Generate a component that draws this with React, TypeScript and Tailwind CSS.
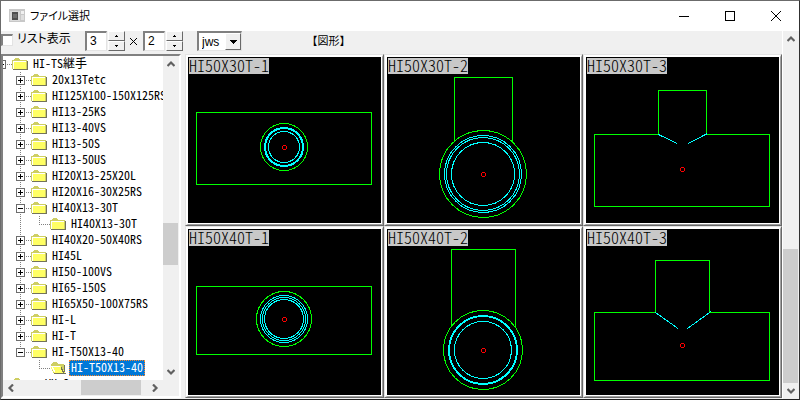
import React from "react";

type TreeRow = {
  label: string;
  level: number;
  mark?: "plus" | "minus";
  open?: boolean;
  selected?: boolean;
  trunk?: boolean;
  cut?: boolean;
};

const rows: TreeRow[] = [
  { label: "HI-TS継手", level: 0, mark: "minus" },
  { label: "20x13Tetc", level: 1, mark: "plus" },
  { label: "HI125X100-150X125RS", level: 1, mark: "plus" },
  { label: "HI13-25KS", level: 1, mark: "plus" },
  { label: "HI13-40VS", level: 1, mark: "plus" },
  { label: "HI13-50S", level: 1, mark: "plus" },
  { label: "HI13-50US", level: 1, mark: "plus" },
  { label: "HI20X13-25X20L", level: 1, mark: "plus" },
  { label: "HI20X16-30X25RS", level: 1, mark: "plus" },
  { label: "HI40X13-30T", level: 1, mark: "minus" },
  { label: "HI40X13-30T", level: 2, trunk: true },
  { label: "HI40X20-50X40RS", level: 1, mark: "plus" },
  { label: "HI45L", level: 1, mark: "plus" },
  { label: "HI50-100VS", level: 1, mark: "plus" },
  { label: "HI65-150S", level: 1, mark: "plus" },
  { label: "HI65X50-100X75RS", level: 1, mark: "plus" },
  { label: "HI-L", level: 1, mark: "plus" },
  { label: "HI-T", level: 1, mark: "plus" },
  { label: "HI-T50X13-40", level: 1, mark: "minus", cut: true },
  { label: "HI-T50X13-40", level: 2, open: true, selected: true },
  { label: "　 VU-S", level: 0 },
];

const GREEN = "#00ff00";
const CYAN = "#00ffff";

function Rings({ cx, cy, green, cyan }: { cx: number; cy: number; green: number; cyan: number[] }) {
  return (
    <g>
      <circle cx={cx} cy={cy} r={green} stroke={GREEN} />
      {cyan.map((r) => (
        <circle key={r} cx={cx} cy={cy} r={r} stroke={CYAN} />
      ))}
    </g>
  );
}

const figures: { name: string; dot: [number, number]; art: React.ReactNode }[] = [
  {
    name: "HI50X30T-1",
    dot: [96.5, 90.5],
    art: (
      <>
        <rect x="8.5" y="55.5" width="175" height="72" stroke={GREEN} />
        <Rings cx={96} cy={90} green={23.5} cyan={[19.5, 18.5, 15.5]} />
      </>
    ),
  },
  {
    name: "HI50X30T-2",
    dot: [96.5, 117.5],
    art: (
      <>
        <path d="M67.5 85V20.5H125.5V85" stroke={GREEN} />
        <Rings cx={96} cy={117} green={43.5} cyan={[38.5, 36.5, 31.5]} />
      </>
    ),
  },
  {
    name: "HI50X30T-3",
    dot: [96.5, 112.5],
    art: (
      <>
        <path d="M72.5 77.5V33.5H120.5V77.5H183.5V149.5H8.5V77.5Z" stroke={GREEN} />
        <path d="M72.5 77.5L91 86.5M121.5 76.5L102 86.5" stroke={CYAN} />
      </>
    ),
  },
  {
    name: "HI50X40T-1",
    dot: [96.5, 90.5],
    art: (
      <>
        <rect x="8.5" y="57.5" width="175" height="68" stroke={GREEN} />
        <Rings cx={96} cy={90} green={27.5} cyan={[23.5, 21.5, 19.5]} />
      </>
    ),
  },
  {
    name: "HI50X40T-2",
    dot: [96.5, 121.5],
    art: (
      <>
        <path d="M64.5 98V20.5H128.5V98" stroke={GREEN} />
        <Rings cx={96} cy={121} green={39.5} cyan={[34.5, 33.5, 28.5]} />
      </>
    ),
  },
  {
    name: "HI50X40T-3",
    dot: [96.5, 116.5],
    art: (
      <>
        <path d="M69.5 83.5V31.5H123.5V83.5H183.5V151.5H8.5V83.5Z" stroke={GREEN} />
        <path d="M69.5 83.5L92 99.5M125 82.5L101.5 99.5" stroke={CYAN} />
      </>
    ),
  },
];

function Folder({ open }: { open?: boolean }) {
  return (
    <svg width="16" height="14" viewBox="0 0 16 14" shapeRendering="crispEdges" className="shrink-0">
      {open ? (
        <>
          <path d="M1 3h1V2h1V1h4v1h1v1h6v9H3z" fill="#cece63" />
          <path d="M0 5h11l4 7H4z" fill="#ffff63" />
          <path d="M0 5.5h10M2 6v1h1v2h1v2" fill="none" stroke="#fff" />
          <path d="M4 12h12v1H4zM14 4h1v7h-1zM11 6h1v2h1v2h1v2h-1v-1h-1V9h-1z" fill="#73735a" />
        </>
      ) : (
        <>
          <path d="M0 3h2V2h1V1h4v1h1v1h7v9H0z" fill="#cece63" />
          <path d="M1 4h13v8H1z" fill="#fff" />
          <path d="M2 5h12v7H2z" fill="#ffff63" />
          <path d="M15 4h1v9H1v-1h14z" fill="#73735a" />
        </>
      )}
    </svg>
  );
}

function Gutter({ row }: { row: TreeRow }) {
  const width = 9 + 19 * row.level;
  const cx = 19 * row.level - 2;
  const nested = row.level === 2;
  return (
    <svg width={width} height="16" viewBox={`0 0 ${width} 16`} fill="none" shapeRendering="crispEdges" className="shrink-0">
      <g stroke="#808080" strokeDasharray="1 1">
        <path d={`M${cx} 8.5H${width}`} />
        {row.level > 0 && <path d={`M${cx + 0.5} 0V${nested || row.cut ? 8 : 16}`} />}
        {row.trunk && <path d="M17.5 0V16" />}
      </g>
      {row.mark && (
        <>
          <rect x={cx - 3.5} y="4.5" width="8" height="8" fill="#fff" stroke="#6d6d6d" />
          <path d={`M${cx - 2} 8.5h5${row.mark === "plus" ? `M${cx + 0.5} 6v5` : ""}`} stroke="#000" />
        </>
      )}
    </svg>
  );
}

const turns = { up: "", down: "rotate-180", left: "-rotate-90", right: "rotate-90" };

function ScrollArrow({ dir, label }: { dir: keyof typeof turns; label: string }) {
  return (
    <button type="button" aria-label={label} className="flex size-4 shrink-0 items-center justify-center">
      <svg width="8" height="8" viewBox="0 0 8 8" className={turns[dir]}>
        <path d="M0.5 6L4 2.5L7.5 6" fill="none" stroke="#606060" strokeWidth="2.2" />
      </svg>
    </button>
  );
}

function Spin({ id, label, value }: { id: string; label: string; value: string }) {
  const key =
    "flex h-[10px] w-[17px] items-center justify-center border border-t-white border-l-white border-r-[#696969] border-b-[#696969] bg-[#f0f0f0]";
  return (
    <div className="flex items-center gap-px">
      <input
        id={id}
        aria-label={label}
        defaultValue={value}
        className="h-5 w-[22px] border-t-2 border-l-2 border-r border-b border-t-[#808080] border-l-[#808080] border-r-[#e3e3e3] border-b-[#e3e3e3] bg-white pb-[2px] pl-[3px] text-xs outline-none"
      />
      <div className="flex flex-col">
        <button type="button" aria-label={`${label} +`} className={key}>
          <svg width="5" height="3" viewBox="0 0 5 3" shapeRendering="crispEdges">
            <path d="M2 0h1v1h1v1H1V1h1z" />
          </svg>
        </button>
        <button type="button" aria-label={`${label} -`} className={key}>
          <svg width="5" height="3" viewBox="0 0 5 3" shapeRendering="crispEdges">
            <path d="M1 0h3v1H3v1H2V1H1z" />
          </svg>
        </button>
      </div>
    </div>
  );
}

function TitleBar() {
  const key = "flex h-full w-[46px] items-center justify-center";
  return (
    <header className="flex h-[30px] shrink-0 items-center bg-white pl-2">
      <svg width="16" height="14" viewBox="0 0 16 14" shapeRendering="crispEdges">
        <path d="M0 0h16v13H0z" fill="#c8c8c8" />
        <path d="M1 2h10v10H1z" fill="#dcdcdc" />
        <path d="M3 3h6v8H3z" fill="#505050" />
        <path d="M4 5h4v4H4z" fill="#6e6e6e" />
        <path d="M12 2h3v3h-3z" fill="#f0f0f0" />
        <path d="M12 6h3v5h-3z" fill="#dedede" />
      </svg>
      <h1 className="ml-[5px] flex-1 text-[11px] [font-feature-settings:'palt']">ファイル選択</h1>
      <button type="button" aria-label="最小化" className={key}>
        <svg width="10" height="10" viewBox="0 0 10 10" shapeRendering="crispEdges">
          <path d="M0 5.5h10" stroke="#000" />
        </svg>
      </button>
      <button type="button" aria-label="最大化" className={key}>
        <svg width="10" height="10" viewBox="0 0 10 10" fill="none" shapeRendering="crispEdges">
          <rect x="0.5" y="0.5" width="9" height="9" stroke="#000" />
        </svg>
      </button>
      <button type="button" aria-label="閉じる" className={key}>
        <svg width="10" height="10" viewBox="0 0 10 10">
          <path d="M0 0l10 10M10 0L0 10" stroke="#000" />
        </svg>
      </button>
    </header>
  );
}

function Toolbar() {
  return (
    <div className="flex h-[23px] shrink-0 items-start text-xs">
      <label className="flex h-4 w-[84px] items-center gap-1 [font-feature-settings:'palt']">
        <input
          type="checkbox"
          className="mt-[2px] size-3 appearance-none border-t-2 border-l-2 border-r border-b border-t-[#808080] border-l-[#808080] border-r-[#e3e3e3] border-b-[#e3e3e3] bg-white"
        />
        リスト表示
      </label>
      <Spin id="cols" label="横" value="3" />
      <svg width="18" height="20" viewBox="0 0 18 20" className="shrink-0">
        <path d="M5 7l7 7M12 7l-7 7" stroke="#000" />
      </svg>
      <Spin id="rows" label="縦" value="2" />
      <div className="relative ml-[14px] h-5 w-[45px]">
        <select
          aria-label="拡張子"
          className="h-5 w-full appearance-none border-t-2 border-l-2 border-r border-b border-t-[#808080] border-l-[#808080] border-r-[#e3e3e3] border-b-[#e3e3e3] bg-white pl-[3px] text-xs outline-none"
        >
          <option>jws</option>
        </select>
        <span className="pointer-events-none absolute top-[2px] right-px flex h-[17px] w-4 items-center justify-center border border-t-white border-l-white border-r-[#696969] border-b-[#696969] bg-[#f0f0f0]">
          <svg width="7" height="4" viewBox="0 0 7 4" shapeRendering="crispEdges">
            <path d="M0 0h7v1H6v1H5v1H4v1H3V3H2V2H1V1H0z" />
          </svg>
        </span>
      </div>
      <span className="ml-[70px] text-[11px] leading-5 [font-feature-settings:'halt']">【図形】</span>
    </div>
  );
}

function Tree() {
  return (
    <nav className="mr-1 flex w-[180px] shrink-0 flex-col border-2 border-t-[#808080] border-l-[#808080] border-r-white border-b-white">
      <div className="flex min-h-0 flex-1">
        <ul className="min-w-0 flex-1 overflow-hidden bg-white font-['Noto_Sans_CJK_JP',sans-serif] [font-feature-settings:'hwid']">
          {rows.map((row, i) => (
            <li key={i} className="flex h-4 items-center text-xs leading-4 whitespace-nowrap">
              <Gutter row={row} />
              <button type="button" className="flex items-center gap-[3px]">
                <Folder open={row.open} />
                <span
                  className={
                    row.selected
                      ? "h-4 bg-[#0078d7] px-[2px] leading-[14px] text-white outline-1 -outline-offset-1 outline-dotted outline-[#ff8728]"
                      : "h-4 px-[2px] leading-[14px]"
                  }
                >
                  {row.label}
                </span>
              </button>
            </li>
          ))}
        </ul>
        <div className="flex w-4 flex-col bg-[#f0f0f0]">
          <ScrollArrow dir="up" label="上へ" />
          <div className="grow-[151]" />
          <div className="mr-px grow-[42] bg-[#cdcdcd]" />
          <div className="grow-[99]" />
          <ScrollArrow dir="down" label="下へ" />
        </div>
      </div>
      <div className="flex h-4 shrink-0 bg-[#f0f0f0] pr-4">
        <ScrollArrow dir="left" label="左へ" />
        <div className="grow-[62]" />
        <div className="mb-px grow-[60] bg-[#cdcdcd]" />
        <div className="grow-[6]" />
        <ScrollArrow dir="right" label="右へ" />
      </div>
    </nav>
  );
}

function FigureGrid() {
  return (
    <main className="grid min-w-0 flex-1 grid-cols-3 grid-rows-2">
      {figures.map((f) => (
        <button
          key={f.name}
          type="button"
          className="border-t border-l border-r border-b border-t-[#e3e3e3] border-l-[#e3e3e3] border-r-[#696969] border-b-[#696969] bg-white"
        >
          <span className="flex h-full border-t-2 border-l-2 border-r border-b border-t-white border-l-white border-r-[#a0a0a0] border-b-[#a0a0a0]">
            <span className="relative mr-px mb-px flex-1 bg-black">
              <svg
                viewBox="0 0 193 166"
                fill="none"
                shapeRendering="crispEdges"
                className="absolute inset-0 size-full"
              >
                {f.art}
                <circle cx={f.dot[0]} cy={f.dot[1]} r="2" stroke="#ff0000" />
              </svg>
              <span className="absolute top-px left-px h-4 bg-[#c8c8c8] font-['Noto_Sans_CJK_JP',sans-serif] text-base leading-[14px] font-light text-black [font-feature-settings:'hwid']">
                {f.name}
              </span>
            </span>
          </span>
        </button>
      ))}
    </main>
  );
}

export default function App() {
  return (
    <div className="flex h-screen flex-col border border-t-[#6b6b6b] border-r-[#303030] border-b-[#202020] border-l-[#6b6b6b] bg-[#f0f0f0] font-['Liberation_Sans','Noto_Sans_CJK_JP',sans-serif] text-black">
      <TitleBar />
      <div className="flex min-h-0 flex-1">
        <div className="flex min-w-0 flex-1 flex-col pb-px">
          <Toolbar />
          <div className="flex min-h-0 flex-1">
            <Tree />
            <FigureGrid />
          </div>
        </div>
        <div className="flex w-[17px] shrink-0 flex-col border-l border-white">
          <ScrollArrow dir="up" label="前の図形" />
          <div className="grow-[201]" />
          <div className="mr-px grow-[134] bg-[#cdcdcd]" />
          <ScrollArrow dir="down" label="次の図形" />
        </div>
      </div>
    </div>
  );
}
